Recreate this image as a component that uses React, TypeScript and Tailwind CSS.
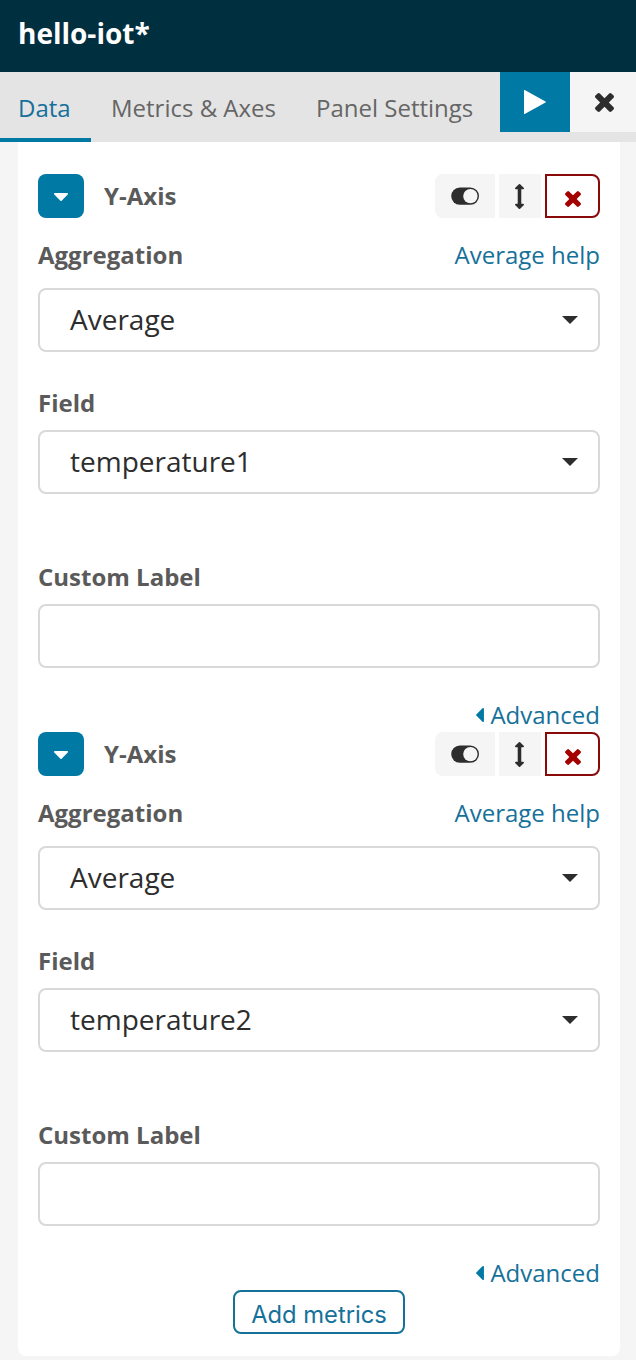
type IconProps = { className?: string };

function TimesIcon({ className }: IconProps) {
  return (
    <svg viewBox="302 366 1188 1188" className={className} fill="currentColor" aria-hidden="true">
      <path d="M1490 1322q0 40-28 68l-136 136q-28 28-68 28t-68-28l-294-294-294 294q-28 28-68 28t-68-28l-136-136q-28-28-28-68t28-68l294-294-294-294q-28-28-28-68t28-68l136-136q28-28 68-28t68 28l294 294 294-294q28-28 68-28t68 28l136 136q28 28 28 68t-28 68l-294 294 294 294q28 28 28 68z" />
    </svg>
  );
}

function CaretDownIcon({ className }: IconProps) {
  return (
    <svg viewBox="384 640 1024 576" className={className} fill="currentColor" aria-hidden="true">
      <path d="M1408 704q0 26-19 45l-448 448q-19 19-45 19t-45-19l-448-448q-19-19-19-45t19-45 45-19h896q26 0 45 19t19 45z" />
    </svg>
  );
}

function CaretLeftIcon({ className }: IconProps) {
  return (
    <svg viewBox="640 384 576 1024" className={className} fill="currentColor" aria-hidden="true">
      <path d="M1216 448v896q0 26-19 45t-45 19-45-19l-448-448q-19-19-19-45t19-45l448-448q19-19 45-19t45 19 19 45z" />
    </svg>
  );
}

function ArrowsVerticalIcon({ className }: IconProps) {
  return (
    <svg viewBox="576 0 640 1792" className={className} fill="currentColor" aria-hidden="true">
      <path d="M1216 320q0 26-19 45t-45 19h-128v1024h128q26 0 45 19t19 45-19 45l-256 256q-19 19-45 19t-45-19l-256-256q-19-19-19-45t19-45 45-19h128v-1024h-128q-26 0-45-19t-19-45 19-45l256-256q19-19 45-19t45 19l256 256q19 19 19 45z" />
    </svg>
  );
}

function ToggleIcon({ className }: IconProps) {
  return (
    <svg viewBox="0 0 28 18" className={className} aria-hidden="true">
      <rect x="0.2" y="0.5" width="27.8" height="17.2" rx="8.6" fill="currentColor" />
      <circle cx="19.4" cy="9.1" r="7.2" fill="#f5f5f5" />
    </svg>
  );
}

function Select({ label, value }: { label: string; value: string }) {
  return (
    <button
      type="button"
      aria-label={label}
      className="flex h-16 w-full items-center justify-between rounded-[8px] border-2 border-[#d9d9d9] bg-white pr-5 pl-[30px] text-[28px] leading-[56px] text-[#2d2d2d]"
    >
      <span className="pb-[3px]">{value}</span>
      <svg viewBox="0 0 16 8" className="h-2 w-4" fill="#2d2d2d" aria-hidden="true">
        <path d="M0 0h16l-8 8z" />
      </svg>
    </button>
  );
}

function Metric({ field }: { field: string }) {
  return (
    <section>
      <div className="flex h-11 items-center">
        <button type="button" aria-label="Collapse" className="flex h-11 w-[46px] items-center justify-center rounded-[8px] bg-[#0079a5] text-white">
          <CaretDownIcon className="mt-px h-2 w-[14px]" />
        </button>
        <span className="ml-5 font-bold">Y-Axis</span>
        <div className="ml-auto flex gap-1 text-[#2d2d2d]">
          <button type="button" aria-label="Toggle" className="flex h-11 w-[60px] items-center justify-center rounded-l-[8px] bg-[#f5f5f5]">
            <ToggleIcon className="h-[18px] w-7" />
          </button>
          <button type="button" aria-label="Move" className="flex h-11 w-[42px] items-center justify-center bg-[#f5f5f5] pr-px">
            <ArrowsVerticalIcon className="h-[25px] w-[9px]" />
          </button>
          <button type="button" aria-label="Remove" className="flex h-11 w-[55px] items-center justify-center rounded-r-[8px] border-2 border-[#8a0a0a] pt-[6px] text-[#a30000]">
            <TimesIcon className="size-4" />
          </button>
        </div>
      </div>
      <div className="flex h-[70px] items-end justify-between pb-[15px]">
        <span className="font-bold">Aggregation</span>
        <a className="text-[#16719a]">Average help</a>
      </div>
      <Select label="Aggregation" value="Average" />
      <div className="flex h-[78px] items-end pb-[9px] font-bold">Field</div>
      <Select label="Field" value={field} />
      <div className="flex h-[110px] items-end pb-[9px] font-bold">Custom Label</div>
      <input aria-label="Custom Label" className="block h-16 w-full rounded-[8px] border-2 border-[#d9d9d9] bg-white px-7" />
      <div className="flex h-16 items-start justify-end pt-[29px] text-[#16719a]">
        <a className="flex items-center gap-[6px]">
          <CaretLeftIcon className="h-[14px] w-2 text-[#0079a5]" />
          Advanced
        </a>
      </div>
    </section>
  );
}

export default function App() {
  return (
    <div className="flex h-[1360px] w-[636px] flex-col bg-[#f5f5f5] font-['Open_Sans',sans-serif] text-[24px] leading-[36px] text-[#5a5a5a]">
      <header className="h-[72px] bg-[#002f40] pt-[15px] pl-[18px] text-[28px] font-bold text-white">hello-iot*</header>
      <nav className="flex h-[70px] bg-[#e4e4e4] text-[#666]">
        <a className="h-[70px] w-[91px] border-b-4 border-[#0079a5] pt-[18px] pl-[18px] text-[#16719a]">Data</a>
        <a className="w-[205px] pt-[18px] pl-5 whitespace-nowrap">Metrics &amp; Axes</a>
        <a className="w-[204px] pt-[18px] pl-5 whitespace-nowrap">Panel Settings</a>
        <button type="button" aria-label="Apply" className="flex h-[60px] w-[70px] items-center justify-center bg-[#0079a5] text-white">
          <svg viewBox="0 0 22 24" className="h-6 w-[22px]" fill="currentColor" aria-hidden="true">
            <path d="M0 .3Q0-.3.7.1L21.5 11.5q.8.5 0 1L.7 23.9q-.7.4-.7-.3z" />
          </svg>
        </button>
        <button type="button" aria-label="Discard" className="flex h-[60px] w-[66px] items-center justify-center bg-[#f5f5f5] pt-px pl-[3px] text-[#2d2d2d]">
          <TimesIcon className="size-[19px]" />
        </button>
      </nav>
      <main className="mx-[18px] mr-4 h-[1214px] rounded-b-[8px] bg-white px-5 pt-8">
        <Metric field="temperature1" />
        <Metric field="temperature2" />
        <div className="flex justify-center">
          <button type="button" className="h-11 w-[172px] rounded-[8px] border-2 border-[#16719a] pt-[6px] font-['Inter',sans-serif] text-[23.75px] leading-[34px] whitespace-nowrap text-[#16719a]">
            Add metrics
          </button>
        </div>
      </main>
    </div>
  );
}
